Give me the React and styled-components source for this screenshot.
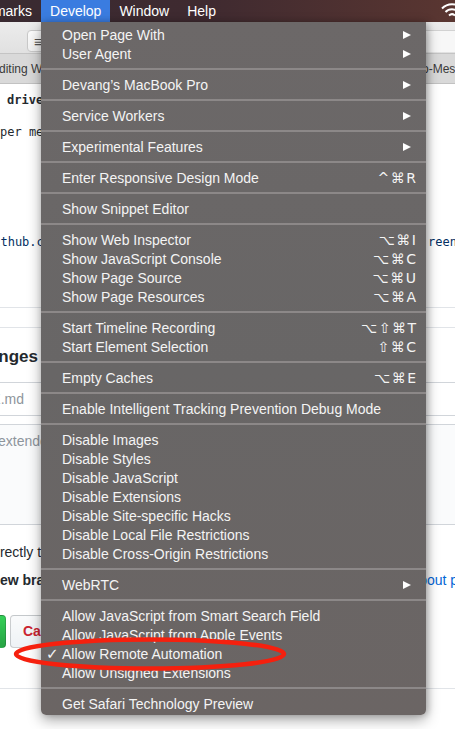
import React from 'react';
import styled, { createGlobalStyle } from 'styled-components';

const Global = createGlobalStyle`
  html, body { margin:0; padding:0; }
  body {
    width:455px; height:729px; overflow:hidden; background:#fff;
    font-family:"Liberation Sans", Arial, sans-serif;
  }
`;

const Screen = styled.div`
  position:relative;
  width:455px;
  height:729px;
  overflow:hidden;
  background:#fff;
`;

/* ---------- system menu bar ---------- */
const MenuBar = styled.div`
  height:22px;
  display:flex;
  align-items:stretch;
  background:linear-gradient(90deg,#392a31 0%,#3f2a30 45%,#5a3631 100%);
  color:#fff;
  font-size:14px;
  overflow:hidden;
`;
const BarItems = styled.div`
  display:flex;
  margin-left:-47px;
`;
const BarItem = styled.div`
  padding:0 9px 0 9px;
  line-height:22px;
  white-space:nowrap;
  background:${p => (p.$active ? '#3a7ce0' : 'transparent')};
`;
const Wifi = styled.svg`
  margin-left:auto;
  margin-right:-8px;
  margin-top:3px;
`;

/* ---------- browser window behind the menu ---------- */
const Row = styled.div`
  display:flex;
  height:${p => p.$h}px;
  align-items:${p => p.$align || 'center'};
  padding-top:${p => p.$pt || 0}px;
  box-sizing:border-box;
  background:${p => p.$bg || 'transparent'};
  border-top:${p => (p.$top ? `1px solid ${p.$top}` : 'none')};
  border-bottom:${p => (p.$bottom ? `1px solid ${p.$bottom}` : 'none')};
`;
const Side = styled.div`
  width:${p => p.$w}px;
  flex:none;
  display:flex;
  align-items:inherit;
  justify-content:${p => (p.$end ? 'flex-end' : 'flex-start')};
  padding-left:${p => p.$pl || 0}px;
  padding-right:${p => p.$pr || 0}px;
  box-sizing:border-box;
  overflow:hidden;
  white-space:nowrap;
`;
const Middle = styled.div`
  flex:1;
`;
const Text = styled.span`
  flex:none;
  margin-left:${p => p.$shift || 0}px;
  font-family:${p => (p.$mono ? '"DejaVu Sans Mono", "Liberation Mono", monospace' : '"Liberation Sans", Arial, sans-serif')};
  font-size:${p => p.$size || 14}px;
  font-weight:${p => (p.$bold ? 700 : 400)};
  color:${p => p.$color || '#24292e'};
`;

const Toolbar = styled(Row)`
  background:linear-gradient(#ececec,#e1e1e1);
  border-bottom:1px solid #c4c4c4;
`;
const SidebarBtn = styled.div`
  margin-left:27px;
  margin-top:1px;
  width:40px;
  height:22px;
  flex:none;
  border:1px solid #c9c9c9;
  border-radius:4px;
  background:linear-gradient(#fdfdfd,#f1f1f1);
  color:#555;
  font-size:15px;
  line-height:21px;
  padding-left:6px;
  box-sizing:border-box;
`;
const Field = styled.div`
  width:100%;
  height:21px;
  margin-top:1px;
  background:#f7f7f7;
  border-top:1px solid #d2d2d2;
`;
const TabBar = styled(Row)`
  background:#d9d9d9;
  border-bottom:1px solid #c2c2c2;
`;

const GreenBtn = styled.div`
  flex:none;
  width:30px;
  height:33px;
  margin-left:-24px;
  border-radius:4px;
  border:1px solid rgba(27,31,35,0.2);
  box-sizing:border-box;
  background:linear-gradient(#34d058,#28a745 90%);
`;
const CancelBtn = styled.div`
  flex:none;
  width:70px;
  height:33px;
  margin-left:4px;
  border-radius:4px;
  border:1px solid rgba(27,31,35,0.2);
  box-sizing:border-box;
  background:linear-gradient(#fafbfc,#eff3f6 90%);
  color:#cb2431;
  font-weight:700;
  font-size:14px;
  line-height:31px;
  padding-left:12px;
`;

/* ---------- Develop menu ---------- */
const Menu = styled.div`
  position:absolute;
  top:22px;
  left:41px;
  width:385px;
  padding:3px 0 2px;
  box-sizing:border-box;
  background:linear-gradient(180deg,#6c6868 0%,#686666 50%,#6b6564 100%);
  border-radius:0 0 5px 5px;
  box-shadow:0 5px 14px rgba(0,0,0,0.35), 2px 0 6px rgba(0,0,0,0.2);
  color:#f4f4f4;
  font-size:14px;
  z-index:2;
`;
const Item = styled.div`
  display:flex;
  align-items:center;
  height:19px;
  padding-right:10px;
  white-space:nowrap;
`;
const CheckCol = styled.span`
  width:21px;
  flex:none;
  padding-left:5px;
  box-sizing:border-box;
  font-family:"DejaVu Sans", sans-serif;
  font-size:15px;
  font-weight:700;
`;
const Label = styled.span`
  flex:1;
`;
const Keys = styled.span`
  font-family:"DejaVu Sans", sans-serif;
  font-size:14px;
  letter-spacing:1.5px;
  margin-right:-1.5px;
`;
const Arrow = styled.span`
  width:0;
  height:0;
  margin-right:5px;
  border-left:8px solid #fff;
  border-top:4.5px solid transparent;
  border-bottom:4.5px solid transparent;
`;
const Sep = styled.div`
  height:2px;
  margin:5px 0;
  background:#8c8888;
`;

const Ring = styled.svg`
  position:absolute;
  left:12px;
  top:636px;
  z-index:3;
`;

const groups = [
  [{ t: 'Open Page With', sub: true }, { t: 'User Agent', sub: true }],
  [{ t: 'Devang\u2019s MacBook Pro', sub: true }],
  [{ t: 'Service Workers', sub: true }],
  [{ t: 'Experimental Features', sub: true }],
  [{ t: 'Enter Responsive Design Mode', k: '^\u2318R' }],
  [{ t: 'Show Snippet Editor' }],
  [
    { t: 'Show Web Inspector', k: '\u2325\u2318I' },
    { t: 'Show JavaScript Console', k: '\u2325\u2318C' },
    { t: 'Show Page Source', k: '\u2325\u2318U' },
    { t: 'Show Page Resources', k: '\u2325\u2318A' },
  ],
  [
    { t: 'Start Timeline Recording', k: '\u2325\u21E7\u2318T' },
    { t: 'Start Element Selection', k: '\u21E7\u2318C' },
  ],
  [{ t: 'Empty Caches', k: '\u2325\u2318E' }],
  [{ t: 'Enable Intelligent Tracking Prevention Debug Mode' }],
  [
    { t: 'Disable Images' },
    { t: 'Disable Styles' },
    { t: 'Disable JavaScript' },
    { t: 'Disable Extensions' },
    { t: 'Disable Site-specific Hacks' },
    { t: 'Disable Local File Restrictions' },
    { t: 'Disable Cross-Origin Restrictions' },
  ],
  [{ t: 'WebRTC', sub: true }],
  [
    { t: 'Allow JavaScript from Smart Search Field' },
    { t: 'Allow JavaScript from Apple Events' },
    { t: 'Allow Remote Automation', on: true },
    { t: 'Allow Unsigned Extensions' },
  ],
  [{ t: 'Get Safari Technology Preview' }],
];

function DevelopMenu() {
  return (
    <Menu>
      {groups.map((g, gi) => (
        <React.Fragment key={gi}>
          {gi > 0 && <Sep />}
          {g.map(it => (
            <Item key={it.t}>
              <CheckCol>{it.on ? '\u2713' : ''}</CheckCol>
              <Label>{it.t}</Label>
              {it.k && <Keys>{it.k}</Keys>}
              {it.sub && <Arrow />}
            </Item>
          ))}
        </React.Fragment>
      ))}
    </Menu>
  );
}

export default function App() {
  return (
    <Screen>
      <Global />
      <MenuBar>
        <BarItems>
          <BarItem>Bookmarks</BarItem>
          <BarItem $active>Develop</BarItem>
          <BarItem>Window</BarItem>
          <BarItem>Help</BarItem>
        </BarItems>
        <Wifi width="22" height="16" viewBox="0 0 22 16">
          <path d="M1 5.5 A14 14 0 0 1 21 5.5" stroke="#fff" strokeWidth="2" fill="none" />
          <path d="M4.5 9 A9 9 0 0 1 17.5 9" stroke="#fff" strokeWidth="2" fill="none" />
          <path d="M8 12.5 A4.5 4.5 0 0 1 14 12.5" stroke="#fff" strokeWidth="2" fill="none" />
        </Wifi>
      </MenuBar>

      <Toolbar $h={32} $align="flex-start" $pt={7}>
        <Side $w={41}><SidebarBtn>&#8801;</SidebarBtn></Side>
        <Middle />
        <Side $w={29}><Field /></Side>
      </Toolbar>
      <TabBar $h={30}>
        <Side $w={41}><Text $size={12} $shift={-1} $color="#3a3a3a">diting WebDriver</Text></Side>
        <Middle />
        <Side $w={29} $pl={0}><Text $size={12} $shift={-4} $color="#3a3a3a">o-Messaging</Text></Side>
      </TabBar>

      <Row $h={32}>
        <Side $w={41} $pl={7}><Text $mono $bold $size={12}>drivers</Text></Side>
      </Row>
      <Row $h={32}>
        <Side $w={41}><Text $mono $size={12}>per methods</Text></Side>
      </Row>
      <Row $h={82} />
      <Row $h={24}>
        <Side $w={41}><Text $mono $size={12} $shift={-14} $color="#032f62">github.com/devang</Text></Side>
        <Middle />
        <Side $w={29} $pl={2}><Text $mono $size={12} $color="#032f62">reenshot</Text></Side>
      </Row>
      <Row $h={53} />
      <Row $h={20} $top="#e1e4e8" />
      <Row $h={55} $top="#e1e4e8" $pt={4}>
        <Side $w={41} $end $pr={3}><Text $bold $size={17}>Commit changes</Text></Side>
      </Row>
      <Row $h={34} $top="#d1d5da" $bottom="#d1d5da">
        <Side $w={41} $end $pr={17}><Text $color="#8e959c">Update README.md</Text></Side>
      </Row>
      <Row $h={8} />
      <Row $h={101} $top="#d1d5da" $bottom="#d1d5da" $bg="#fafbfc" $align="flex-start" $pt={8}>
        <Side $w={41}><Text $shift={-2} $color="#8e959c">extended description</Text></Side>
      </Row>
      <Row $h={13} />
      <Row $h={28}>
        <Side $w={41}><Text $shift={-11}>directly to the master branch.</Text></Side>
      </Row>
      <Row $h={28}>
        <Side $w={41}><Text $bold $shift={-8.6}>new branch</Text></Side>
        <Middle />
        <Side $w={29}><Text $shift={-14.6} $color="#0366d6">about pull requests</Text></Side>
      </Row>
      <Row $h={21} />
      <Row $h={33}>
        <Side $w={41}>
          <GreenBtn />
          <CancelBtn>Cancel</CancelBtn>
        </Side>
      </Row>
      <Row $h={40} />
      <Row $h={41} $top="#e1e4e8" />

      <DevelopMenu />

      <Ring width="280" height="38" viewBox="0 0 280 38">
        <ellipse cx="138" cy="18" rx="134" ry="14.5" stroke="#f5200e" strokeWidth="4.5" fill="none" />
      </Ring>
    </Screen>
  );
}
